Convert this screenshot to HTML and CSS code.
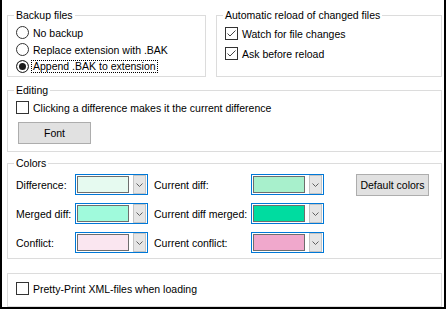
FILE: index.html
```html
<!DOCTYPE html>
<html lang="en">
<head>
    <meta charset="UTF-8">
    <meta name="viewport" content="width=device-width, initial-scale=1.0">
    <title>Options</title>
    <link rel="stylesheet" href="styles.css">
</head>
<body>
    <div class="window">
        <div class="top-row">
            <fieldset class="group backup">
                <legend>Backup files</legend>
                <label class="option"><span class="radio"></span>No backup</label>
                <label class="option"><span class="radio"></span>Replace extension with .BAK</label>
                <label class="option"><span class="radio checked"></span><span class="focus">Append .BAK to extension</span></label>
            </fieldset>
            <fieldset class="group reload">
                <legend>Automatic reload of changed files</legend>
                <label class="option"><span class="check"><svg width="11" height="11" viewBox="0 0 11 11"><polyline points="1.5,5.5 4,8 9.5,2.5" /></svg></span>Watch for file changes</label>
                <label class="option"><span class="check"><svg width="11" height="11" viewBox="0 0 11 11"><polyline points="1.5,5.5 4,8 9.5,2.5" /></svg></span>Ask before reload</label>
            </fieldset>
        </div>

        <fieldset class="group editing">
            <legend>Editing</legend>
            <label class="option"><span class="check"></span>Clicking a difference makes it the current difference</label>
            <button class="btn font-btn">Font</button>
        </fieldset>

        <fieldset class="group colors">
            <legend>Colors</legend>
            <div class="color-row">
                <span class="clabel">Difference:</span>
                <div class="combo"><span class="swatch" style="background:#e6faf0"></span><span class="drop"><svg width="7" height="4" viewBox="0 0 7 4"><polyline points="0.5,0.5 3.5,3.5 6.5,0.5" /></svg></span></div>
                <span class="clabel wide">Current diff:</span>
                <div class="combo"><span class="swatch" style="background:#a8f0cc"></span><span class="drop"><svg width="7" height="4" viewBox="0 0 7 4"><polyline points="0.5,0.5 3.5,3.5 6.5,0.5" /></svg></span></div>
                <button class="btn default-btn">Default colors</button>
            </div>
            <div class="color-row">
                <span class="clabel">Merged diff:</span>
                <div class="combo"><span class="swatch" style="background:#a0fadc"></span><span class="drop"><svg width="7" height="4" viewBox="0 0 7 4"><polyline points="0.5,0.5 3.5,3.5 6.5,0.5" /></svg></span></div>
                <span class="clabel wide">Current diff merged:</span>
                <div class="combo"><span class="swatch" style="background:#00dca0"></span><span class="drop"><svg width="7" height="4" viewBox="0 0 7 4"><polyline points="0.5,0.5 3.5,3.5 6.5,0.5" /></svg></span></div>
            </div>
            <div class="color-row">
                <span class="clabel">Conflict:</span>
                <div class="combo"><span class="swatch" style="background:#fae6f0"></span><span class="drop"><svg width="7" height="4" viewBox="0 0 7 4"><polyline points="0.5,0.5 3.5,3.5 6.5,0.5" /></svg></span></div>
                <span class="clabel wide">Current conflict:</span>
                <div class="combo"><span class="swatch" style="background:#f0a8cc"></span><span class="drop"><svg width="7" height="4" viewBox="0 0 7 4"><polyline points="0.5,0.5 3.5,3.5 6.5,0.5" /></svg></span></div>
            </div>
        </fieldset>

        <div class="group xml">
            <label class="option"><span class="check"></span>Pretty-Print XML-files when loading</label>
        </div>
    </div>
</body>
</html>
```

FILE: styles.css
```css
body {
    margin: 0;
    font-family: "Liberation Sans", Arial, sans-serif;
    font-size: 10.5px;
    color: #000;
    background: #fff;
}

.window {
    width: 446px;
    height: 309px;
    box-sizing: border-box;
    border: 2px solid #000;
    border-top: none;
    padding: 9px 2px 0 5px;
    background: #fff;
}

.top-row {
    display: flex;
    gap: 10px;
}

.group {
    margin: 0;
    padding: 0 8px;
    border: 1px solid #dcdcdc;
    box-sizing: border-box;
    min-width: 0;
}

legend {
    padding: 0 2px;
    margin-left: -2px;
    line-height: 13px;
}

.backup {
    width: 199px;
    height: 68px;
    padding-top: 2px;
}

.reload {
    flex: 1;
    height: 68px;
    padding-top: 3px;
}

.reload .option + .option {
    margin-top: 3px;
}

.option {
    display: flex;
    align-items: center;
    height: 17px;
    white-space: nowrap;
}

.radio {
    width: 13px;
    height: 13px;
    box-sizing: border-box;
    border: 1px solid #333;
    border-radius: 50%;
    margin-right: 4px;
    background: #fff;
    flex-shrink: 0;
}

.radio.checked {
    background: #1a1a1a;
    box-shadow: inset 0 0 0 2px #fff;
}

.focus {
    margin-left: -2px;
    padding: 0 1px;
    border: 1px dotted #000;
    line-height: 11px;
}

.check {
    width: 13px;
    height: 13px;
    box-sizing: border-box;
    border: 1px solid #333;
    margin-right: 4px;
    background: #fff;
    flex-shrink: 0;
    display: flex;
}

.check svg polyline {
    fill: none;
    stroke: #444;
    stroke-width: 1;
}

.editing {
    margin-top: 7px;
    height: 68px;
    padding-top: 2px;
}

.btn {
    display: block;
    width: 73px;
    height: 22px;
    box-sizing: border-box;
    background: #e1e1e1;
    border: 1px solid #adadad;
    font-family: inherit;
    font-size: 10.5px;
    color: #000;
    padding: 0;
}

.font-btn {
    margin: 6px 0 0 2px;
}

.colors {
    margin-top: 5px;
    height: 102px;
    padding-top: 4px;
}

.color-row {
    display: flex;
    align-items: center;
    height: 21px;
}

.color-row + .color-row {
    margin-top: 8px;
}

.clabel {
    width: 59px;
    white-space: nowrap;
}

.clabel.wide {
    width: 97px;
    margin-left: 6px;
}

.combo {
    width: 73px;
    height: 21px;
    box-sizing: border-box;
    border: 1px solid #0078d7;
    padding: 1px;
    display: flex;
    gap: 4px;
}

.swatch {
    width: 53px;
    box-sizing: border-box;
    border: 1px solid #6d6d6d;
}

.drop {
    width: 13px;
    margin: -1px 0;
    box-sizing: border-box;
    background: #e5e5e5;
    border: 1px solid #c4c4c4;
    display: flex;
    align-items: center;
    justify-content: center;
}

.drop svg polyline {
    fill: none;
    stroke: #606060;
    stroke-width: 1;
}

.default-btn {
    margin-left: 32px;
}

.xml {
    margin-top: 14px;
    height: 34px;
    padding-top: 6px;
}
```
